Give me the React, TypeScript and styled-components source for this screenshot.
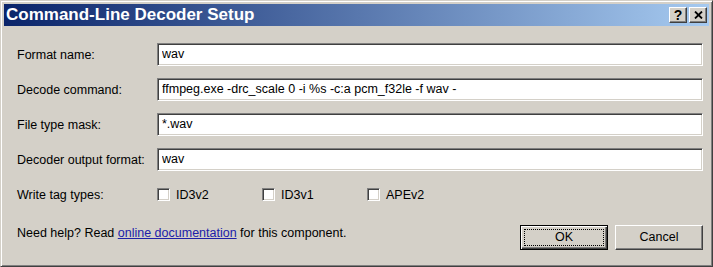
import styled, { createGlobalStyle } from 'styled-components'

const GlobalStyle = createGlobalStyle`
  html, body {
    margin: 0;
    padding: 0;
    background: #d4d0c8;
  }
  body {
    font-family: 'Liberation Sans', Arial, sans-serif;
    font-size: 12.5px;
    color: #000;
  }
`

const Window = styled.div`
  box-sizing: border-box;
  display: flex;
  flex-direction: column;
  width: 713px;
  height: 267px;
  padding: 3px;
  background: #d4d0c8;
  border: 1px solid;
  border-color: #d4d0c8 #404040 #404040 #d4d0c8;
  box-shadow: inset 1px 1px #ffffff, inset -1px -1px #808080;
`
const TitleBar = styled.div`
  display: flex;
  align-items: center;
  height: 22px;
  padding: 0 2px;
  background: linear-gradient(to right, #0a246a, #a6caf0);
`
const Title = styled.span`
  flex: 1;
  color: #fff;
  font-size: 17px;
  font-weight: bold;
  white-space: nowrap;
`
const CaptionButtons = styled.div`
  display: flex;
  gap: 2px;
`
const CaptionButton = styled.button`
  box-sizing: border-box;
  display: flex;
  align-items: center;
  justify-content: center;
  width: 18px;
  height: 16px;
  padding: 0;
  background: #d4d0c8;
  border: 1px solid;
  border-color: #ffffff #404040 #404040 #ffffff;
  box-shadow: inset -1px -1px #808080;
  font-family: 'Liberation Sans', Arial, sans-serif;
  font-size: 14px;
  font-weight: bold;
  line-height: 1;
  color: #000;
`
const Body = styled.div`
  flex: 1;
  display: flex;
  flex-direction: column;
  padding: 17px 6px 0 13px;
`
const Form = styled.div`
  display: grid;
  grid-template-columns: 140px 1fr;
  grid-auto-rows: 23px;
  row-gap: 12px;
  align-items: center;
`
const Label = styled.label`
  white-space: nowrap;
`
const TextField = styled.input`
  box-sizing: border-box;
  width: 100%;
  height: 23px;
  padding: 0 4px 2px;
  background: #fff;
  border: 1px solid;
  border-color: #808080 #ffffff #ffffff #808080;
  box-shadow: inset 1px 1px #404040, inset -1px -1px #d4d0c8;
  font: inherit;
  color: #000;
  outline: none;
`
const CheckGroup = styled.div`
  display: flex;
  align-items: center;
`
const CheckItem = styled.label`
  display: flex;
  align-items: center;
  gap: 6px;
  width: 105px;
`
const CheckBox = styled.span`
  box-sizing: border-box;
  width: 13px;
  height: 13px;
  background: #fff;
  border: 1px solid;
  border-color: #808080 #ffffff #ffffff #808080;
  box-shadow: inset 1px 1px #404040, inset -1px -1px #d4d0c8;
`
const Footer = styled.div`
  display: flex;
  align-items: flex-start;
  margin-top: 19px;
`
const HelpText = styled.p`
  flex: 1;
  margin: 0;
  line-height: 16px;
`
const Link = styled.a`
  color: #2020a8;
  text-decoration: underline;
`
const ButtonRow = styled.div`
  display: flex;
  gap: 7px;
`
const DialogButton = styled.button<{ $default?: boolean }>`
  box-sizing: border-box;
  position: relative;
  width: 88px;
  height: 25px;
  padding: 0 0 1px;
  background: #d4d0c8;
  font-family: 'Liberation Sans', Arial, sans-serif;
  font-size: 12.5px;
  color: #000;
  border: 1px solid;
  border-color: ${p => (p.$default ? '#000 #000 #000 #000' : '#ffffff #404040 #404040 #ffffff')};
  box-shadow: ${p =>
    p.$default
      ? 'inset 1px 1px #ffffff, inset -1px -1px #404040, inset -2px -2px #808080'
      : 'inset -1px -1px #808080'};
`
const FocusRing = styled.span`
  position: absolute;
  inset: 3px;
  border: 1px dotted #000;
`

const fields = [
  { label: 'Format name:', value: 'wav' },
  { label: 'Decode command:', value: 'ffmpeg.exe -drc_scale 0 -i %s -c:a pcm_f32le -f wav -' },
  { label: 'File type mask:', value: '*.wav' },
  { label: 'Decoder output format:', value: 'wav' },
]

const tagTypes = ['ID3v2', 'ID3v1', 'APEv2']

const App = () => {
  return (
    <>
      <GlobalStyle />
      <Window>
        <TitleBar>
          <Title>Command-Line Decoder Setup</Title>
          <CaptionButtons>
            <CaptionButton>?</CaptionButton>
            <CaptionButton>
              <svg width="9" height="8" viewBox="0 0 9 8">
                <path d="M1 0.5 L8 7.5 M8 0.5 L1 7.5" stroke="#000" strokeWidth="1.8" />
              </svg>
            </CaptionButton>
          </CaptionButtons>
        </TitleBar>
        <Body>
          <Form>
            {fields.map(f => (
              <>
                <Label key={f.label + '-l'}>{f.label}</Label>
                <TextField key={f.label + '-i'} defaultValue={f.value} spellCheck={false} />
              </>
            ))}
            <Label>Write tag types:</Label>
            <CheckGroup>
              {tagTypes.map(t => (
                <CheckItem key={t}>
                  <CheckBox />
                  {t}
                </CheckItem>
              ))}
            </CheckGroup>
          </Form>
          <Footer>
            <HelpText>
              Need help? Read <Link href="#">online documentation</Link> for this component.
            </HelpText>
            <ButtonRow>
              <DialogButton $default>
                <FocusRing />
                OK
              </DialogButton>
              <DialogButton>Cancel</DialogButton>
            </ButtonRow>
          </Footer>
        </Body>
      </Window>
    </>
  )
}

export default App
